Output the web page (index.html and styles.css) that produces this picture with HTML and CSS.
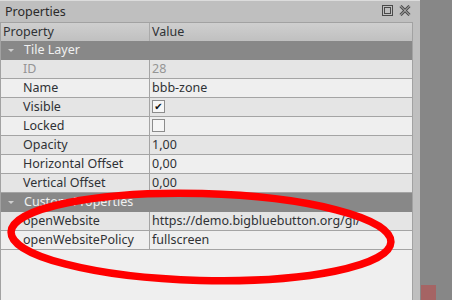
FILE: index.html
```html
<!DOCTYPE html>
<html lang="en">
<head>
    <meta charset="UTF-8">
    <title>Properties</title>
    <link rel="stylesheet" href="styles.css">
</head>
<body>
    <div class="app">
        <div class="dock">
            <div class="titlebar">
                <span class="title">Properties</span>
                <span class="dock-buttons">
                    <svg width="11" height="11" viewBox="0 0 11 11">
                        <rect x="0.5" y="0.5" width="10" height="10" fill="none" stroke="#4a4a4a"/>
                        <rect x="2.5" y="2.5" width="6" height="6" fill="none" stroke="#4a4a4a"/>
                    </svg>
                    <svg width="12" height="11" viewBox="0 0 12 11">
                        <path d="M1.5 1 L10.5 10 M10.5 1 L1.5 10" stroke="#4a4a4a" stroke-width="3"/>
                        <path d="M1.5 1 L10.5 10 M10.5 1 L1.5 10" stroke="#c4c4c4" stroke-width="1"/>
                    </svg>
                </span>
            </div>
            <div class="panel">
                <div class="table">
                    <div class="row header">
                        <div class="cell key">Property</div>
                        <div class="cell">Value</div>
                    </div>
                    <div class="row group"><span class="arrow"></span>Tile Layer</div>
                    <div class="row alt disabled">
                        <div class="cell key">ID</div>
                        <div class="cell">28</div>
                    </div>
                    <div class="row">
                        <div class="cell key">Name</div>
                        <div class="cell">bbb-zone</div>
                    </div>
                    <div class="row alt">
                        <div class="cell key">Visible</div>
                        <div class="cell"><span class="check">&#10004;</span></div>
                    </div>
                    <div class="row">
                        <div class="cell key">Locked</div>
                        <div class="cell"><span class="check"></span></div>
                    </div>
                    <div class="row alt">
                        <div class="cell key">Opacity</div>
                        <div class="cell">1,00</div>
                    </div>
                    <div class="row">
                        <div class="cell key">Horizontal Offset</div>
                        <div class="cell">0,00</div>
                    </div>
                    <div class="row alt">
                        <div class="cell key">Vertical Offset</div>
                        <div class="cell">0,00</div>
                    </div>
                    <div class="row group"><span class="arrow"></span>Custom Properties</div>
                    <div class="row alt">
                        <div class="cell key">openWebsite</div>
                        <div class="cell">https://demo.bigbluebutton.org/gl/</div>
                    </div>
                    <div class="row">
                        <div class="cell key">openWebsitePolicy</div>
                        <div class="cell">fullscreen</div>
                    </div>
                </div>
            </div>
        </div>
        <div class="side">
            <div class="marker"></div>
        </div>
        <svg class="annotation" width="452" height="300" viewBox="0 0 452 300">
            <ellipse cx="201" cy="237" rx="190" ry="43.5" transform="rotate(1.5 201 237)"
                     fill="none" stroke="#ff0000" stroke-width="7.5"/>
        </svg>
    </div>
</body>
</html>
```

FILE: styles.css
```css
body {
    margin: 0;
    font-family: "Noto Sans", "Open Sans", sans-serif;
    font-size: 12.5px;
    color: #2f3235;
}
.app {
    position: relative;
    display: flex;
    width: 452px;
    height: 300px;
    overflow: hidden;
}
.dock {
    width: 420px;
    display: flex;
    flex-direction: column;
    background-color: #bfbfbf;
}
.titlebar {
    height: 21px;
    border-top: 1px solid #dcdcdc;
    display: flex;
    align-items: center;
    justify-content: space-between;
    padding: 0 9px 0 5px;
}
.title {
    color: #2a2a2a;
    margin-top: -1px;
}
.dock-buttons {
    display: flex;
    gap: 6px;
    margin-top: -2px;
}
.panel {
    flex: 1;
    padding-right: 7px;
    display: flex;
}
.table {
    flex: 1;
    background-color: #efefef;
    border: 1px solid #a2a2a2;
    border-bottom: none;
}
.row {
    display: flex;
    height: 18px;
    line-height: 18px;
    border-bottom: 1px solid #a4a4a4;
    background-color: #efefef;
}
.row.alt {
    background-color: #e5e5e5;
}
.row.header {
    background: linear-gradient(#cfcfcf, #c0c0c0);
    border-bottom: none;
}
.row.header .cell {
    padding-left: 2px;
}
.row.header .key {
    border-right-color: #aaaaaa;
}
.cell {
    padding-left: 2px;
    white-space: nowrap;
}
.cell.key {
    width: 126px;
    padding-left: 22px;
    border-right: 1px solid #a4a4a4;
}
.row.header .cell.key {
    width: 146px;
}
.row.disabled {
    color: #959595;
}
.row.group {
    background-color: #888888;
    color: #f0f0f0;
    padding-left: 23px;
    position: relative;
    border-bottom: none;
    height: 19px;
}
.arrow {
    position: absolute;
    left: 7px;
    top: 8px;
    border-left: 3px solid transparent;
    border-right: 3px solid transparent;
    border-top: 3px solid #cfcfcf;
}
.check {
    display: inline-block;
    width: 11px;
    height: 11px;
    border: 1px solid #8c8c8c;
    background-color: #f6f6f6;
    color: #111;
    font-family: "DejaVu Sans", sans-serif;
    font-size: 10px;
    line-height: 11px;
    text-align: center;
    vertical-align: middle;
    margin-top: -2px;
}
.side {
    flex: 1;
    background-color: #878787;
    position: relative;
}
.marker {
    position: absolute;
    left: 1px;
    bottom: 0;
    width: 15px;
    height: 15px;
    background-color: #a56464;
}
.annotation {
    position: absolute;
    left: 0;
    top: 0;
}
```
